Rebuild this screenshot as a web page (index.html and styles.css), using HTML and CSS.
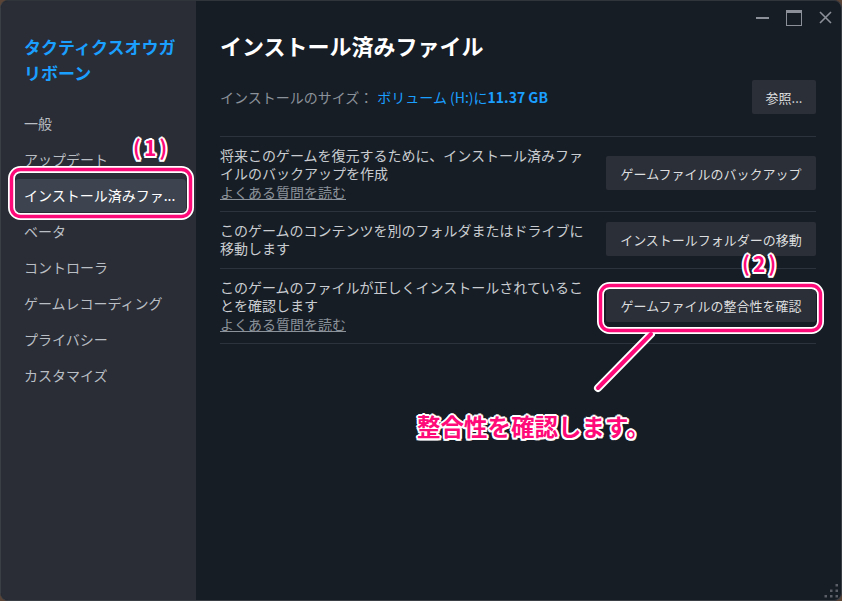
FILE: index.html
```html
<!DOCTYPE html>
<html lang="ja">
<head>
<meta charset="utf-8">
<title>インストール済みファイル</title>
<link rel="stylesheet" href="styles.css">
</head>
<body>
<div class="window">
  <aside class="sidebar">
    <div class="game-title">タクティクスオウガリボーン</div>
    <nav class="nav">
      <div class="nav-item">一般</div>
      <div class="nav-item">アップデート</div>
      <div class="nav-item active">インストール済みファ...</div>
      <div class="nav-item">ベータ</div>
      <div class="nav-item">コントローラ</div>
      <div class="nav-item">ゲームレコーディング</div>
      <div class="nav-item">プライバシー</div>
      <div class="nav-item">カスタマイズ</div>
    </nav>
  </aside>
  <main class="main">
    <header class="titlebar">
      <span class="ctl ctl-min"></span>
      <span class="ctl ctl-max"></span>
      <span class="ctl ctl-close">
        <svg width="13" height="13" viewBox="0 0 13 13"><path d="M1 1 L12 12 M12 1 L1 12" stroke="#8c9199" stroke-width="1.6" fill="none"/></svg>
      </span>
    </header>
    <h1 class="page-title">インストール済みファイル</h1>
    <div class="size-row">
      <div class="size-text"><span class="label">インストールのサイズ：</span><span class="vol">ボリューム (H:)に<b>11.37 GB</b></span></div>
      <button class="btn btn-small">参照...</button>
    </div>
    <section class="row">
      <div class="desc">
        <p class="line">将来このゲームを復元するために、インストール済みファイルのバックアップを作成</p>
        <a class="faq">よくある質問を読む</a>
      </div>
      <button class="btn">ゲームファイルのバックアップ</button>
    </section>
    <section class="row">
      <div class="desc">
        <p class="line">このゲームのコンテンツを別のフォルダまたはドライブに移動します</p>
      </div>
      <button class="btn">インストールフォルダーの移動</button>
    </section>
    <section class="row last">
      <div class="desc">
        <p class="line">このゲームのファイルが正しくインストールされていることを確認します</p>
        <a class="faq">よくある質問を読む</a>
      </div>
      <button class="btn">ゲームファイルの整合性を確認</button>
    </section>
  </main>

  <div class="grip">
    <svg width="15" height="15" viewBox="0 0 15 15" fill="#5a5f67">
      <rect x="11.5" y="1" width="2.5" height="2.5"/>
      <rect x="6" y="6.5" width="2.5" height="2.5"/><rect x="11.5" y="6.5" width="2.5" height="2.5"/>
      <rect x="0.5" y="12" width="2.5" height="2.5"/><rect x="6" y="12" width="2.5" height="2.5"/><rect x="11.5" y="12" width="2.5" height="2.5"/>
    </svg>
  </div>

  <svg class="annot" width="842" height="601" viewBox="0 0 842 601">
    <g fill="none" stroke-linecap="round" stroke-linejoin="round">
      <rect x="11.5" y="169.5" width="179" height="47" rx="9" stroke="#fff" stroke-width="7"/>
      <rect x="600.5" y="285.5" width="220" height="45" rx="9" stroke="#fff" stroke-width="7"/>
      <line x1="651" y1="334" x2="598" y2="388" stroke="#fff" stroke-width="8"/>
      <rect x="11.5" y="169.5" width="179" height="47" rx="9" stroke="#ff0a78" stroke-width="3.5"/>
      <rect x="600.5" y="285.5" width="220" height="45" rx="9" stroke="#ff0a78" stroke-width="3.5"/>
      <line x1="651" y1="334" x2="598" y2="388" stroke="#ff0a78" stroke-width="4"/>
    </g>
  </svg>
  <div class="callout c1">(1)</div>
  <div class="callout c2">(2)</div>
  <div class="callout c3">整合性を確認します。</div>
</div>
</body>
</html>
```

FILE: styles.css
```css
* { box-sizing: border-box; }
html, body { margin: 0; padding: 0; }
body {
  width: 842px;
  height: 601px;
  overflow: hidden;
  background: #5a4436;
  font-family: "Noto Sans CJK JP", "Noto Sans", sans-serif;
}
.window {
  position: relative;
  width: 842px;
  height: 601px;
  display: flex;
  border-radius: 8px;
  overflow: hidden;
  border: 1px solid #3a3e45;
  border-top-color: #30343b;
  background: #171d25;
}
.sidebar {
  width: 195px;
  flex: none;
  background: #2a2d35;
  padding-top: 33px;
}
.game-title {
  width: 178px;
  padding-left: 23px;
  font-size: 17px;
  font-weight: 700;
  line-height: 26px;
  color: #1a9fff;
}
.nav {
  margin-top: 21px;
  display: flex;
  flex-direction: column;
  gap: 3px;
}
.nav-item {
  height: 33px;
  line-height: 33px;
  margin: 0 10px 0 14px;
  padding: 0 2px 0 9px;
  border-radius: 4px;
  font-size: 14px;
  color: #b9bec4;
  white-space: nowrap;
}
.nav-item.active {
  background: #3d4450;
  color: #ffffff;
}
.main {
  flex: 1;
  padding: 0 25px 0 24px;
  display: flex;
  flex-direction: column;
}
.titlebar {
  height: 29px;
  margin-right: -20px;
  display: flex;
  justify-content: flex-end;
  align-items: flex-start;
  padding-top: 10px;
}
.ctl {
  width: 32px;
  height: 13px;
  display: flex;
  justify-content: center;
  align-items: center;
}
.ctl-min::before {
  content: "";
  width: 13px;
  height: 2px;
  background: #8c9199;
  margin-top: 1px;
}
.ctl-max::before {
  content: "";
  width: 14px;
  height: 12px;
  border: 1.5px solid #8c9199;
  border-top-width: 3px;
}
.ctl-close { width: 22px; margin-left: 4px; }
.page-title {
  margin: 0;
  font-size: 22px;
  font-weight: 700;
  line-height: 30px;
  color: #ffffff;
}
.size-row {
  margin-top: 20px;
  height: 34px;
  display: flex;
  justify-content: space-between;
  align-items: center;
  margin-bottom: 22px;
}
.size-text { font-size: 14px; line-height: 18px; }
.label { color: #8b929a; margin-right: 4px; }
.vol { color: #1a9fff; }
.vol b { font-weight: 700; }
.btn {
  height: 34px;
  border: none;
  border-radius: 2px;
  background: #2b2f38;
  color: #dcdedf;
  font-family: "Noto Sans CJK JP", "Noto Sans", sans-serif;
  font-size: 13px;
  padding: 0 14px;
  width: 210px;
  flex: none;
}
.btn-small { width: 64px; padding: 0; }
.row {
  border-top: 1px solid #2d333c;
  padding: 9px 0 11px;
  display: flex;
  justify-content: space-between;
  align-items: center;
}
.row.last { border-bottom: 1px solid #2d333c; }
.desc {
  width: 372px;
  font-size: 14px;
  line-height: 18px;
  color: #c9cdd1;
  display: flex;
  flex-direction: column;
}
.line { margin: 0; }
.faq {
  color: #8b929a;
  text-decoration: underline;
  align-self: flex-start;
  line-height: 19px;
  margin-top: 1px;
  margin-bottom: -2px;
}
.grip {
  position: absolute;
  right: 2px;
  bottom: 2px;
  width: 15px;
  height: 15px;
  display: flex;
}
.annot {
  position: absolute;
  left: -1px;
  top: -1px;
}
.callout {
  position: absolute;
  color: #ff0a78;
  font-weight: 700;
  white-space: nowrap;
  text-shadow:
    -2px 0 0 #fff, 2px 0 0 #fff, 0 -2px 0 #fff, 0 2px 0 #fff,
    -1.5px -1.5px 0 #fff, 1.5px 1.5px 0 #fff, -1.5px 1.5px 0 #fff, 1.5px -1.5px 0 #fff;
}
.c1 { left: 132px; top: 132px; font-size: 21px; line-height: 28px; letter-spacing: 3px; }
.c2 { left: 741px; top: 248px; font-size: 21px; line-height: 28px; letter-spacing: 3px; }
.c3 { left: 416px; top: 409px; font-size: 23.5px; line-height: 32px; }
```
